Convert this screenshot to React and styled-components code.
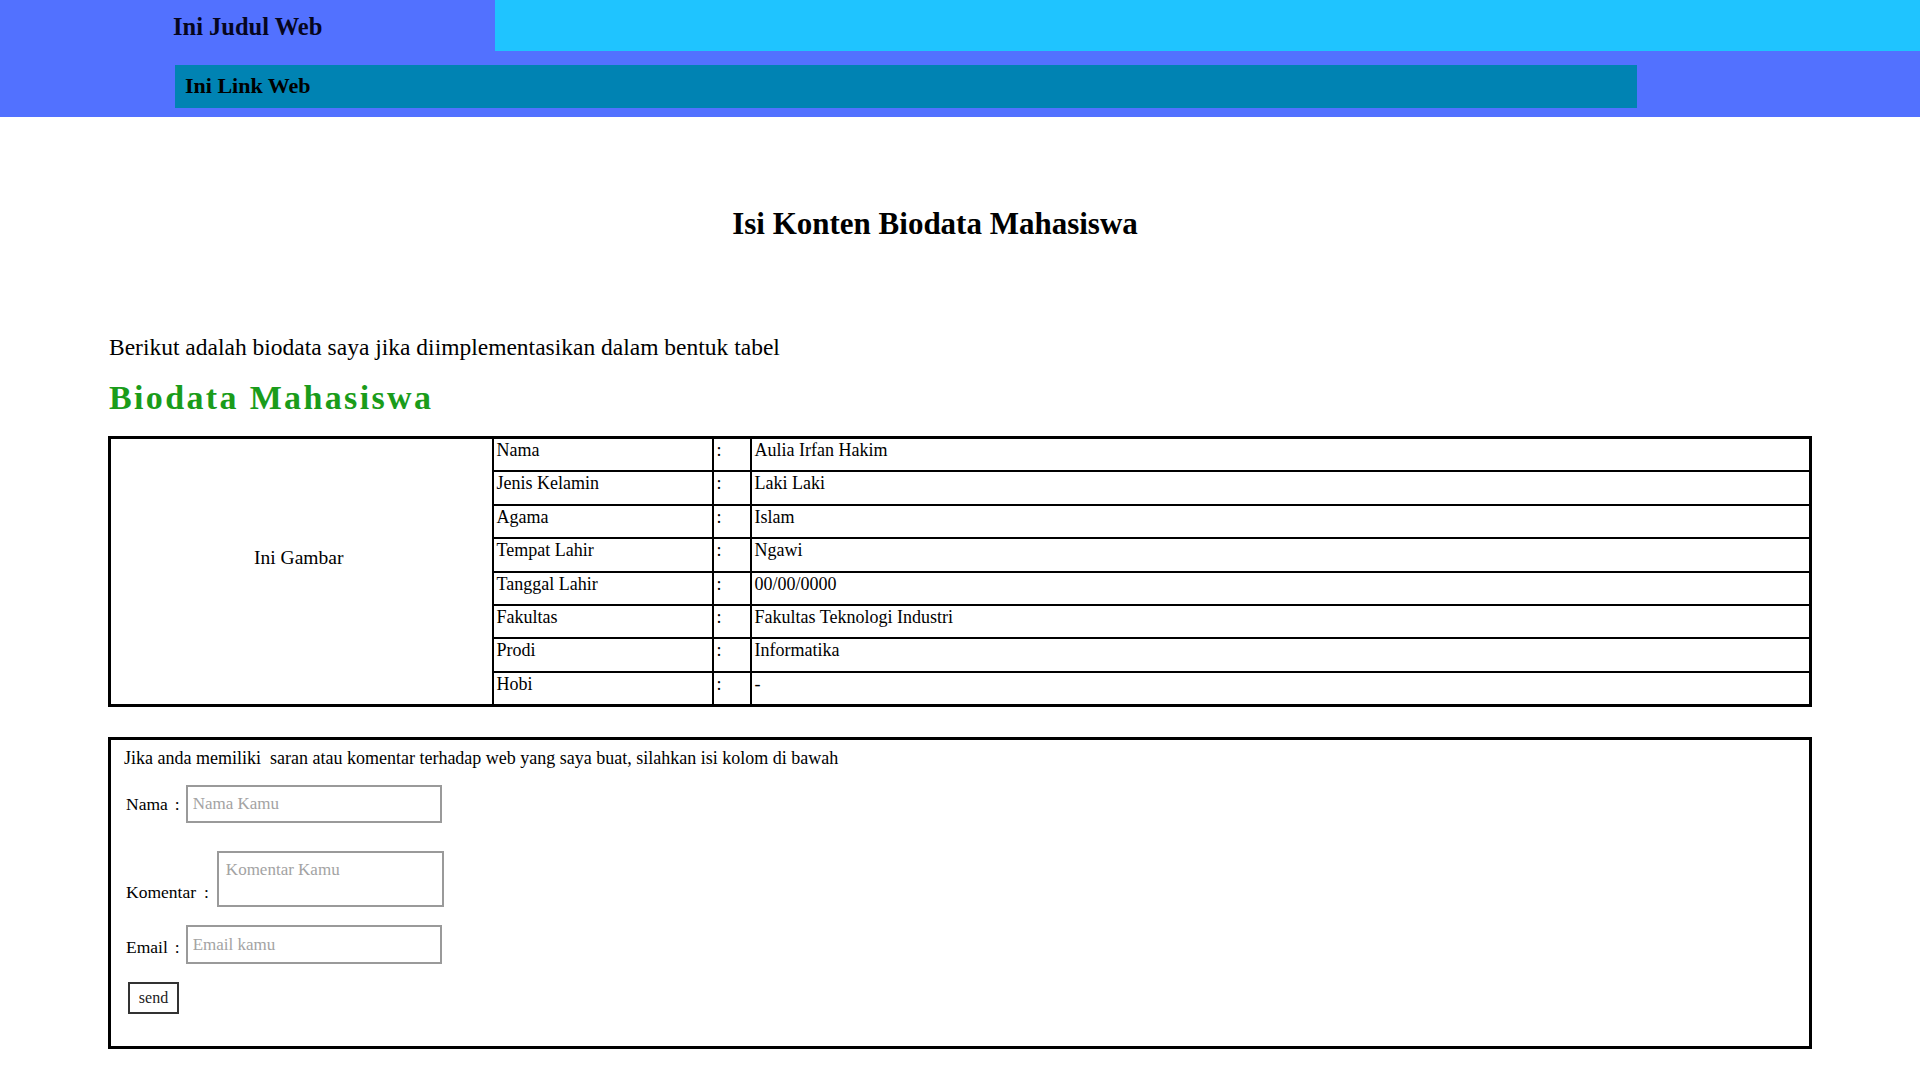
import styled, { createGlobalStyle } from 'styled-components';

const GlobalStyle = createGlobalStyle`
    body {
        margin: 0;
        background: #ffffff;
        font-family: "Liberation Serif", "Times New Roman", serif;
        color: #000;
    }
`

const Header = styled.header`
    background-color: #5271ff;
    padding-bottom: 9px;
    display: flex;
    flex-direction: column;
`
const TopRow = styled.div`
    display: flex;
    height: 51px;
`
const SiteTitle = styled.h2`
    margin: 0;
    width: 495px;
    padding: 2px 0 0 173px;
    box-sizing: border-box;
    display: flex;
    align-items: center;
    font-size: 24.5px;
    font-weight: bold;
    color: #06061e;
`
const Banner = styled.div`
    flex: 1;
    background-color: #1fc4ff;
`
const NavBar = styled.nav`
    margin: 14px 283px 0 175px;
    height: 43px;
    background-color: #0083b3;
    display: flex;
    align-items: center;
    padding: 0 0 2px 10px;
    box-sizing: border-box;
    font-size: 22px;
    font-weight: bold;
    color: #000;
`

const Main = styled.main`
    padding: 0 108px 40px 108px;
`
const PageTitle = styled.h1`
    margin: 89px 50px 0 0;
    text-align: center;
    font-size: 31px;
`
const Intro = styled.p`
    margin: 92px 0 0 1px;
    font-size: 23.5px;
`
const SectionTitle = styled.h2`
    margin: 18px 0 0 1px;
    font-size: 34px;
    letter-spacing: 2.35px;
    color: #1a9c1a;
`

const BioTable = styled.table`
    margin-top: 19px;
    width: 100%;
    border-collapse: collapse;
    table-layout: fixed;
    border: 3px solid #000;
`
const Col = styled.col`
    width: ${props => props.$width};
`
const Cell = styled.td`
    border: 2px solid #000;
    height: 30.4px;
    padding: 1px 3px 0 3px;
    vertical-align: top;
    font-size: 18px;
`
const PhotoCell = styled.td`
    border: 2px solid #000;
    text-align: center;
    vertical-align: middle;
    padding: 0 5px 28px 0;
    font-size: 19.5px;
`

const FormBox = styled.form`
    margin-top: 30px;
    border: 3px solid #000;
    padding: 8px 13px 32px 13px;
    display: flex;
    flex-direction: column;
    align-items: flex-start;
`
const FormNote = styled.div`
    font-size: 18px;
    white-space: pre;
`
const FieldRow = styled.div`
    display: flex;
    align-items: ${props => props.$align || 'center'};
    margin-top: ${props => props.$top};
    margin-left: 2px;
    font-size: 17.5px;
`
const Label = styled.span`
    display: flex;
    margin: ${props => props.$shift || '0'};
`
const Colon = styled.span`
    margin: ${props => props.$gap || '0 6px 0 7px'};
`
const TextInput = styled.input`
    width: 256px;
    height: ${props => props.$height || '38px'};
    box-sizing: border-box;
    border: 2px solid #9a9a9a;
    padding: 0 5px;
    font-family: "Liberation Serif", "Times New Roman", serif;
    font-size: 17px;
    &::placeholder {
        color: #a3a3a3;
    }
`
const TextArea = styled.textarea`
    width: 227px;
    height: 56px;
    box-sizing: border-box;
    border: 2px solid #9a9a9a;
    padding: 7px 7px;
    resize: none;
    font-family: "Liberation Serif", "Times New Roman", serif;
    font-size: 17px;
    &::placeholder {
        color: #a3a3a3;
    }
`
const SendButton = styled.button`
    margin: 18px 0 0 4px;
    width: 51px;
    height: 32px;
    background: #fff;
    border: 2px solid #333;
    font-family: "Liberation Serif", "Times New Roman", serif;
    font-size: 16px;
    color: #222;
    padding: 0;
`

const biodata = [
    ['Nama', 'Aulia Irfan Hakim'],
    ['Jenis Kelamin', 'Laki Laki'],
    ['Agama', 'Islam'],
    ['Tempat Lahir', 'Ngawi'],
    ['Tanggal Lahir', '00/00/0000'],
    ['Fakultas', 'Fakultas Teknologi Industri'],
    ['Prodi', 'Informatika'],
    ['Hobi', '-'],
]

function App () {
    return (
        <>
            <GlobalStyle />
            <Header>
                <TopRow>
                    <SiteTitle>Ini Judul Web</SiteTitle>
                    <Banner />
                </TopRow>
                <NavBar>Ini Link Web</NavBar>
            </Header>
            <Main>
                <PageTitle>Isi Konten Biodata Mahasiswa</PageTitle>
                <Intro>Berikut adalah biodata saya jika diimplementasikan dalam bentuk tabel</Intro>
                <SectionTitle>Biodata Mahasiswa</SectionTitle>
                <BioTable>
                    <colgroup>
                        <Col $width="383px" />
                        <Col $width="220px" />
                        <Col $width="38px" />
                        <Col $width="auto" />
                    </colgroup>
                    <tbody>
                        {biodata.map(([label, value], i) => (
                            <tr key={label}>
                                {i === 0 && <PhotoCell rowSpan={8}>Ini Gambar</PhotoCell>}
                                <Cell>{label}</Cell>
                                <Cell>:</Cell>
                                <Cell>{value}</Cell>
                            </tr>
                        ))}
                    </tbody>
                </BioTable>
                <FormBox onSubmit={e => e.preventDefault()}>
                    <FormNote>Jika anda memiliki  saran atau komentar terhadap web yang saya buat, silahkan isi kolom di bawah</FormNote>
                    <FieldRow $top="16px">
                        <Label>Nama<Colon>:</Colon></Label>
                        <TextInput placeholder="Nama Kamu" />
                    </FieldRow>
                    <FieldRow $top="28px" $align="flex-end">
                        <Label $shift="0 0 4px 0">Komentar<Colon $gap="0 8px">:</Colon></Label>
                        <TextArea placeholder="Komentar Kamu" />
                    </FieldRow>
                    <FieldRow $top="18px">
                        <Label $shift="5px 0 0 0">Email<Colon>:</Colon></Label>
                        <TextInput placeholder="Email kamu" $height="39px" />
                    </FieldRow>
                    <SendButton type="submit">send</SendButton>
                </FormBox>
            </Main>
        </>
    )
};

export default App;
